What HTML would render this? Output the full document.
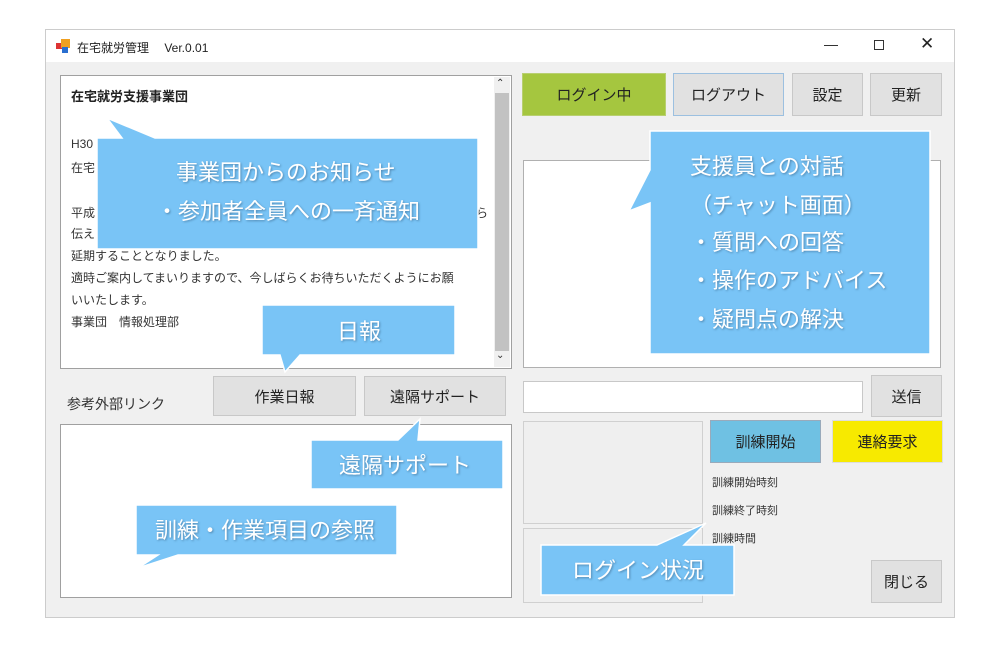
<!DOCTYPE html>
<html><head><meta charset="utf-8"><style>
*{margin:0;padding:0;box-sizing:border-box}
body{width:1000px;height:652px;background:#fff;position:relative;overflow:hidden;font-family:"Liberation Sans","Noto Sans CJK JP",sans-serif;color:#222}
.a{position:absolute}
.win{left:45px;top:29px;width:910px;height:589px;border:1px solid #ccc;background:#f0f0f0}
.title{left:46px;top:30px;width:908px;height:32px;background:#fff;font-size:12px}
.btn{position:absolute;background:#e1e1e1;border:1px solid #c8c8c8;display:flex;align-items:center;justify-content:center;font-size:15px;color:#222}
.box{position:absolute;background:#fff;border:1px solid #a0a0a0}
.gbox{position:absolute;border:1px solid #d0d0d0;background:#efefef}
.t{position:absolute;font-size:12px;color:#333;white-space:nowrap}
.s{font-size:11px}
</style></head><body>
<div class="a win"></div>
<div class="a title">
 <svg class="a" style="left:10px;top:8px" width="16" height="16"><rect x="0" y="5" width="6" height="6" fill="#d33"/><rect x="5" y="1" width="9" height="9" fill="#f0a020"/><rect x="6" y="9" width="6" height="6" fill="#2a6fd0"/></svg>
 <span class="a" style="left:31px;top:9px">在宅就労管理　 Ver.0.01</span>
 <span class="a" style="left:778px;top:6px;font-size:14px">—</span>
 <span class="a" style="left:828px;top:10px;width:10px;height:10px;border:1px solid #333"></span>
 <span class="a" style="left:874px;top:4px;font-size:17px">✕</span>
</div>

<div class="box" style="left:60px;top:75px;width:452px;height:294px"></div>
<div class="a" style="left:494px;top:77px;width:16px;height:290px;background:#f0f0f0"></div>
<div class="a" style="left:495px;top:93px;width:14px;height:258px;background:#c2c2c2"></div>
<span class="t" style="left:496px;top:78px;font-size:10px">⌃</span>
<span class="t" style="left:496px;top:350px;font-size:10px">⌄</span>
<span class="t" style="left:71px;top:86px;font-size:13px;font-weight:bold;color:#222">在宅就労支援事業団</span>
<span class="t" style="left:71px;top:137px">H30</span>
<span class="t" style="left:71px;top:159px">在宅</span>
<span class="t" style="left:71px;top:204px">平成</span>
<span class="t" style="left:476px;top:204px">ら</span>
<span class="t" style="left:71px;top:225px">伝え</span>
<span class="t" style="left:71px;top:247px">延期することとなりました。</span>
<span class="t" style="left:71px;top:269px">適時ご案内してまいりますので、今しばらくお待ちいただくようにお願</span>
<span class="t" style="left:71px;top:291px">いいたします。</span>
<span class="t" style="left:71px;top:313px">事業団　情報処理部</span>

<span class="t" style="left:67px;top:394px;font-size:14px">参考外部リンク</span>
<div class="btn" style="left:213px;top:376px;width:143px;height:40px">作業日報</div>
<div class="btn" style="left:364px;top:376px;width:142px;height:40px">遠隔サポート</div>
<div class="box" style="left:60px;top:424px;width:452px;height:174px;border-color:#a0a0a0"></div>

<div class="btn" style="left:522px;top:73px;width:144px;height:43px;background:#a5c63f;border-color:#b8cf70">ログイン中</div>
<div class="btn" style="left:673px;top:73px;width:111px;height:43px;border-color:#9cc0e0">ログアウト</div>
<div class="btn" style="left:792px;top:73px;width:71px;height:43px">設定</div>
<div class="btn" style="left:870px;top:73px;width:72px;height:43px">更新</div>
<div class="box" style="left:523px;top:160px;width:418px;height:208px;border-color:#b0b0b0"></div>
<div class="box" style="left:523px;top:381px;width:340px;height:32px;border-color:#c8c8c8"></div>
<div class="btn" style="left:871px;top:375px;width:71px;height:42px">送信</div>
<div class="gbox" style="left:523px;top:421px;width:180px;height:103px"></div>
<div class="gbox" style="left:523px;top:528px;width:180px;height:75px"></div>
<div class="btn" style="left:710px;top:420px;width:111px;height:43px;background:#6fc1e3;border-color:#9ab">訓練開始</div>
<div class="btn" style="left:832px;top:420px;width:111px;height:43px;background:#f7ea00;border-color:#ddd">連絡要求</div>
<span class="t s" style="left:712px;top:474px">訓練開始時刻</span>
<span class="t s" style="left:712px;top:502px">訓練終了時刻</span>
<span class="t s" style="left:712px;top:530px">訓練時間</span>
<div class="btn" style="left:871px;top:560px;width:71px;height:43px">閉じる</div>

<svg class="a" style="left:0;top:0" width="1000" height="652">
<defs><filter id="sh"><feDropShadow dx="1" dy="1" stdDeviation="1" flood-color="#3a6a90" flood-opacity="0.7"/></filter></defs>
<g fill="#79c4f6" stroke="#fff" stroke-width="1.5">
<path d="M97 138 L122 138 L107 118 L155 138 L478 138 L478 249 L97 249 Z"/>
<path d="M262 305 L455 305 L455 355 L300 355 L285 372 L280 355 L262 355 Z"/>
<path d="M311 440 L398 440 L420 419 L418 440 L503 440 L503 489 L311 489 Z"/>
<path d="M136 505 L397 505 L397 555 L178 555 L138 568 L158 555 L136 555 Z"/>
<path d="M650 131 L930 131 L930 354 L650 354 L650 203 L629 211 L650 170 Z"/>
<path d="M541 545 L657 545 L706 523 L684 545 L734 545 L734 595 L541 595 Z"/>
</g>
<g fill="#fff" filter="url(#sh)" font-family="Liberation Sans,Noto Sans CJK JP,sans-serif" font-size="22">
<text x="176" y="180">事業団からのお知らせ</text>
<text x="156" y="219">・参加者全員への一斉通知</text>
<text x="337" y="339">日報</text>
<text x="339" y="473">遠隔サポート</text>
<text x="155" y="538">訓練・作業項目の参照</text>
<text x="690" y="174">支援員との対話</text>
<text x="690" y="213">（チャット画面）</text>
<text x="690" y="250">・質問への回答</text>
<text x="690" y="288">・操作のアドバイス</text>
<text x="690" y="327">・疑問点の解決</text>
<text x="572" y="578">ログイン状況</text>
</g>
</svg>
</body></html>
